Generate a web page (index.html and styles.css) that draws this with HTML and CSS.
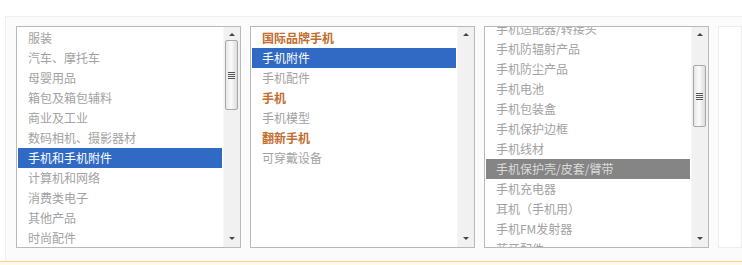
FILE: index.html
```html
<!DOCTYPE html>
<html lang="zh-CN">
<head>
    <meta charset="UTF-8">
    <title>选择类目</title>
    <link rel="stylesheet" href="styles.css">
</head>
<body>
    <div class="panel">
        <div class="lists">
            <div class="listbox">
                <ul class="items">
                    <li>服装</li>
                    <li>汽车、摩托车</li>
                    <li>母婴用品</li>
                    <li>箱包及箱包辅料</li>
                    <li>商业及工业</li>
                    <li>数码相机、摄影器材</li>
                    <li class="selected">手机和手机附件</li>
                    <li>计算机和网络</li>
                    <li>消费类电子</li>
                    <li>其他产品</li>
                    <li>时尚配件</li>
                </ul>
                <div class="scrollbar">
                    <span class="arrow up"></span>
                    <div class="track">
                        <div class="thumb" style="margin-top: 0px; height: 70px;"><i></i></div>
                    </div>
                    <span class="arrow down"></span>
                </div>
            </div>

            <div class="listbox">
                <ul class="items">
                    <li class="brand">国际品牌手机</li>
                    <li class="selected">手机附件</li>
                    <li>手机配件</li>
                    <li class="brand">手机</li>
                    <li>手机模型</li>
                    <li class="brand">翻新手机</li>
                    <li>可穿戴设备</li>
                </ul>
                <div class="scrollbar">
                    <span class="arrow up"></span>
                    <div class="track"></div>
                    <span class="arrow down"></span>
                </div>
            </div>

            <div class="listbox">
                <ul class="items scrolled">
                    <li>手机适配器/转接头</li>
                    <li>手机防辐射产品</li>
                    <li>手机防尘产品</li>
                    <li>手机电池</li>
                    <li>手机包装盒</li>
                    <li>手机保护边框</li>
                    <li>手机线材</li>
                    <li class="inactive">手机保护壳/皮套/臂带</li>
                    <li>手机充电器</li>
                    <li>耳机（手机用）</li>
                    <li>手机FM发射器</li>
                    <li>蓝牙配件</li>
                </ul>
                <div class="scrollbar">
                    <span class="arrow up"></span>
                    <div class="track">
                        <div class="thumb" style="margin-top: 25px; height: 62px;"><i></i></div>
                    </div>
                    <span class="arrow down"></span>
                </div>
            </div>

            <div class="listbox empty"></div>
        </div>
    </div>
    <div class="notice"></div>
</body>
</html>
```

FILE: styles.css
```css
body {
    margin: 0;
    background-color: #ffffff;
    font-family: "Noto Sans CJK SC", "Liberation Sans", sans-serif;
    font-size: 12px;
    overflow: hidden;
}

.panel {
    margin: 16px 0 0 5px;
    border-top: 1px solid #f0f0f0;
    border-left: 1px solid #f0f0f0;
    background-color: #fbfbfb;
    padding: 9px 0 13px 10px;
}

.lists {
    display: flex;
    gap: 9px;
}

.listbox {
    display: flex;
    flex: 0 0 225px;
    height: 222px;
    box-sizing: border-box;
    border: 1px solid #b9b9b9;
    background-color: #ffffff;
    overflow: hidden;
}

.listbox.empty {
    flex: 1 0 auto;
    border-color: #ececec;
}

.items {
    list-style-type: none;
    margin: 0;
    padding: 1px;
    flex: 1;
    overflow: hidden;
}

.items.scrolled {
    margin-top: -9px;
}

.items li {
    height: 20px;
    line-height: 20px;
    padding-left: 10px;
    color: #a2a2a2;
    white-space: nowrap;
}

.items li.brand {
    color: #c26c2e;
    font-weight: bold;
}

.items li.selected {
    background-color: #316ac5;
    color: #ffffff;
}

.items li.inactive {
    background-color: #858585;
    color: #dadada;
}

/* barra de rolagem desenhada */
.scrollbar {
    flex: 0 0 17px;
    display: flex;
    flex-direction: column;
    background-color: #f1f1f1;
    border-left: 1px solid #f7f7f7;
    box-sizing: border-box;
}

.arrow {
    height: 11px;
    display: flex;
    align-items: center;
    justify-content: center;
}

.arrow.up {
    padding-top: 2px;
}

.arrow.down {
    padding-bottom: 3px;
}

.arrow.up::before {
    content: "";
    border-left: 3px solid transparent;
    border-right: 3px solid transparent;
    border-bottom: 3px solid #444;
}

.arrow.down::before {
    content: "";
    border-left: 3px solid transparent;
    border-right: 3px solid transparent;
    border-top: 3px solid #444;
}

.track {
    flex: 1;
}

.thumb {
    margin-left: 1px;
    width: 13px;
    box-sizing: border-box;
    border: 1px solid #a8a8a8;
    border-radius: 2px;
    background: linear-gradient(to right, #e6e6e6, #fbfbfb 45%, #dcdcdc);
    display: flex;
    align-items: center;
    justify-content: center;
}

.thumb i {
    width: 7px;
    height: 7px;
    background: repeating-linear-gradient(to bottom, #555 0 1px, transparent 1px 2px);
}

.notice {
    border-top: 1px solid #f0d27c;
    background-color: #fffbea;
    height: 3px;
}
```
